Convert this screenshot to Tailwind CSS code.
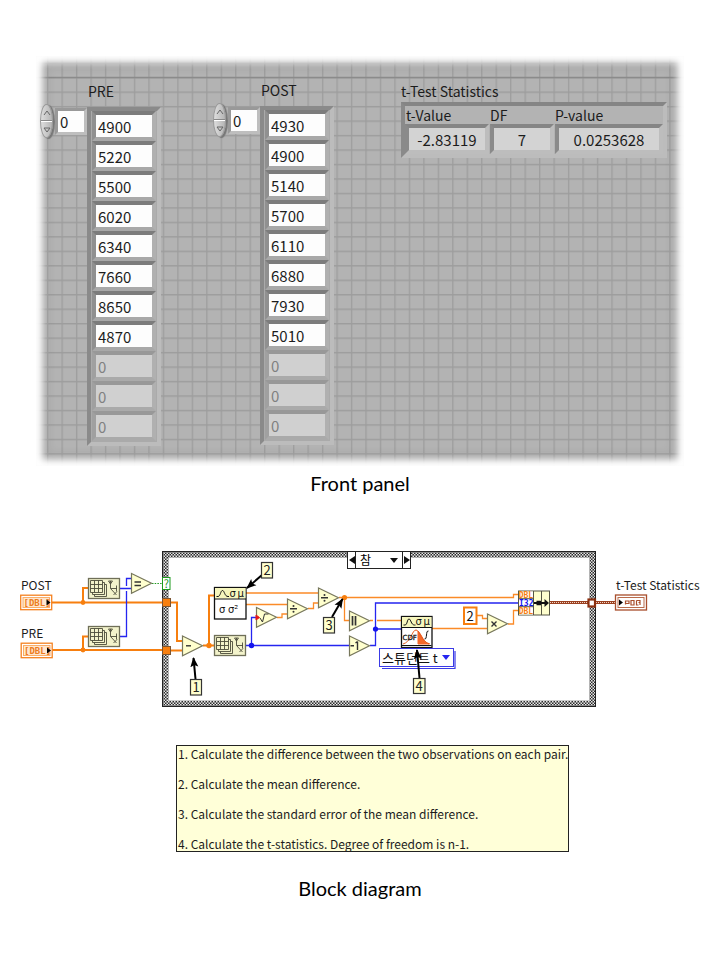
<!DOCTYPE html>
<html lang="en">
<head>
<meta charset="utf-8">
<meta name="viewport" content="width=device-width, initial-scale=1">
<title>Paired t-test</title>
<script src="https://cdn.jsdelivr.net/npm/@tailwindcss/browser@4"></script>
</head>
<body class="bg-white pb-14 font-['Noto_Sans_CJK_KR','Noto_Sans',sans-serif] text-[#1c1c1c]">
<main class="mx-auto max-w-[720px]">

<section aria-label="Front panel">
  <div class="relative mx-9 mt-14 overflow-hidden bg-[#b3b3b3]">
    <svg class="absolute inset-0 h-full w-full" aria-hidden="true">
      <defs><pattern id="grid" x="11" y="21" width="14.47" height="14.47" patternUnits="userSpaceOnUse"><path d="M.7 0V14.47M0 .7H14.47" stroke="#9d9d9d" stroke-width="1.3"/></pattern></defs>
      <rect width="100%" height="100%" fill="url(#grid)"/>
      <path d="M0 21.5H700" stroke="#8b8b8b" stroke-width="1.4"/>
    </svg>
    <div class="absolute inset-0 shadow-[inset_0_0_7px_7px_#fff,inset_0_0_12px_8px_#00000030]"></div>
    <div class="relative flex items-start pb-5 pl-1 pt-6 text-[15px] leading-[22px]">
      <div class="flex w-[173px] items-start" id="pre"></div>
      <div class="-mt-px flex w-[188px] items-start" id="post"></div>
      <div>
        <h2 class="text-[14px] leading-[22px]">t-Test Statistics</h2>
        <div class="flex border-4 border-b-[#bcbcbc] border-l-[#8a8a8a] border-r-[#bcbcbc] border-t-[#858585] bg-[#b3b3b3] text-[14px]">
          <label class="block w-[85px] leading-[18px]"><span class="block pl-px">t-Value</span><input readonly value="-2.83119" class="block h-[30px] w-[84px] border-4 border-b-[#bdbdbd] border-l-[#8a8a8a] border-r-[#bdbdbd] border-t-[#858585] bg-[#d3d3d3] text-center text-[15px]"></label>
          <label class="block w-[65px] leading-[18px]"><span class="block">DF</span><input readonly value="7" class="block h-[30px] w-[64px] border-4 border-b-[#bdbdbd] border-l-[#8a8a8a] border-r-[#bdbdbd] border-t-[#858585] bg-[#d3d3d3] text-center text-[15px]"></label>
          <label class="block w-[108px] leading-[18px]"><span class="block">P-value</span><input readonly value="0.0253628" class="block h-[30px] w-[108px] border-4 border-b-[#bdbdbd] border-l-[#8a8a8a] border-r-[#bdbdbd] border-t-[#858585] bg-[#d3d3d3] text-center text-[15px]"></label>
        </div>
      </div>
    </div>
  </div>
  <h1 class="mt-px text-center font-['Lato',sans-serif] text-[20px] leading-8 text-black">Front panel</h1>
</section>

<section aria-label="Block diagram">
  <svg class="mt-10 block w-full" viewBox="0 540 720 180" font-family="Noto Sans CJK KR, Noto Sans, sans-serif" font-size="12" fill="none">
    <defs>
      <pattern id="weave" width="3" height="3" patternUnits="userSpaceOnUse"><rect width="3" height="3" fill="#2a2a2a"/><path d="M0 0h1.500v1.500h-1.500zM1.500 1.500h1.500v1.500h-1.500z" fill="#e8e8e8"/></pattern>
      <pattern id="braid" width="2" height="3" patternUnits="userSpaceOnUse" y="602"><rect width="2" height="3" fill="#9a4020"/><rect y="1" width="1" height="1" fill="#f3d5c5"/></pattern>
      <marker id="tip" viewBox="0 0 10 10" refX="9" refY="5" markerWidth="10" markerHeight="10" markerUnits="userSpaceOnUse" orient="auto"><path d="M0 1L10 5L0 9L2 5Z" fill="#000"/></marker>
      <g id="tri"><path d="M.5 .5L20.5 10.3L.5 20.3Z" fill="#ffffce" stroke="#77775c" stroke-width="1.2"/></g>
      <g id="size">
        <rect x=".5" y=".5" width="31" height="20" fill="#f3f3cb" stroke="#6f6f58" stroke-width="1.3"/>
        <g stroke="#4c4c3a" stroke-width=".9" fill="#f3f3cb"><path d="M6.500 6.500h12v12h-12z"/><path d="M4.500 4.500h12v12h-12z"/><path d="M2.500 2.500h12v12h-12zM6.500 2.500v12M10.500 2.500v12M2.500 6.500h12M2.500 10.500h12"/></g>
        <path d="M20.500 3h4M22.500 3v7.500l6 6.500M22.500 10.500h6.500M28.500 7.500v6M25.500 17l3.500-3.500M20.500 3l2 3 2-3" stroke="#4c4c3a" stroke-width=".9"/>
      </g>
      <g id="dbl">
        <rect x=".7" y=".7" width="31" height="14.500" fill="#fff" stroke="#f58220" stroke-width="1.3"/>
        <rect x="3" y="3" width="26.500" height="10" fill="#ffe6cd" stroke="#f9ad6a" stroke-width="1"/>
        <text x="3.500" y="11.300" font-family="DejaVu Sans Mono, monospace" font-size="9" font-weight="700" fill="#ec7c20">[DBL]</text>
        <path d="M26.500 5l4 3-4 3z" fill="#000"/>
      </g>
    </defs>

    <!-- case structure frame -->
    <path fill-rule="evenodd" fill="url(#weave)" d="M162 552H596V708H162ZM168.500 558.500V702H589.500V558.500Z"/>
    <rect x="162.500" y="552.500" width="433" height="155" stroke="#222"/>
    <rect x="168.500" y="558.500" width="421" height="143" stroke="#aaa" stroke-width=".6"/>

    <!-- array wires -->
    <g stroke="#f77f0f" stroke-width="2">
      <path d="M52 603.500H163M52 651H163M83 603V589H89M83 651V637.500H89M170 603.500H177V642H183M170 651.500H183M203 646.500H214M209 646.500V596.500H214"/>
    </g>
    <!-- scalar wires -->
    <g stroke="#fb8b28" stroke-width="1.3">
      <path d="M246 594H318M246 605.500H288M277 618.500H282V615H288M308 609.500H313.500V604H319M339 598.500H513.500V595.500H518M344.500 598.500V621.500H350M370 621.500H373M377 621.500H401M432 629.500H488M477 616.500H482.500V619.500H488M508 625H513.500V611.500H518"/>
    </g>
    <g stroke="#2525f0" stroke-width="1.3">
      <path d="M120 589.500H132M120 637.500H126.500V592M126.500 587V579.500H132M246 646.500H350M251.500 646.500V618.500H257M370 646.500H375.500V604H518M375.500 630H401"/>
    </g>
    <g fill="#f77f0f"><circle cx="83" cy="603.500" r="2.400"/><circle cx="83" cy="651" r="2.400"/><circle cx="209" cy="646.500" r="2.700"/><circle cx="344.500" cy="598.500" r="2.600"/></g>
    <g fill="#1515ee"><circle cx="251.500" cy="646.500" r="2.700"/><circle cx="375.500" cy="630" r="2.600"/></g>
    <path d="M152 584.500H162" stroke="#1d9a1d" stroke-dasharray="1.500 1.200"/>

    <!-- terminals and tunnels -->
    <g fill="#1c1c1c"><text x="21" y="591">POST</text><text x="21" y="639">PRE</text><text x="616" y="591">t-Test Statistics</text></g>
    <use href="#dbl" x="20" y="595.500"/><use href="#dbl" x="20.500" y="643.500"/>
    <g fill="#f77f0f" stroke="#7c5430"><rect x="162.500" y="599.500" width="8" height="8"/><rect x="162.500" y="647.500" width="8" height="8"/></g>
    <rect x="162.500" y="578.500" width="7.500" height="12" fill="#fff" stroke="#1d9a1d"/>
    <text x="163.800" y="588.500" font-size="11" fill="#1d9a1d">?</text>

    <!-- array size functions -->
    <use href="#size" x="88" y="579"/><use href="#size" x="88" y="627"/><use href="#size" x="214" y="636"/>

    <!-- arithmetic functions -->
    <use href="#tri" x="131" y="574"/><use href="#tri" x="182" y="636.500"/><use href="#tri" x="256" y="608"/><use href="#tri" x="287" y="599.500"/><use href="#tri" x="318" y="588.500"/><use href="#tri" x="349" y="611.500"/><use href="#tri" x="349" y="636.500"/><use href="#tri" x="487" y="614.500"/>
    <g stroke="#333" stroke-width="1.400">
      <path d="M134.500 583H141M134.500 586.500H141"/>
      <path d="M186 646.800H191"/>
      <path d="M260 619L262.500 623L264.500 615H268.500" stroke-width="1"/>
      <path d="M290 609.800H297M321 598.800H328"/>
      <path d="M352.500 617V626.500M355.500 617V626.500" stroke-width="1.700"/>
      <path d="M350.500 646.800H354M357.500 642.500V651M355.500 644L357.500 642.500"/>
      <path d="M491.500 622.500L496.500 627.500M496.500 622.500L491.500 627.500"/>
    </g>
    <g fill="#333"><circle cx="293.500" cy="607" r="1"/><circle cx="293.500" cy="612.700" r="1"/><circle cx="324.500" cy="596" r="1"/><circle cx="324.500" cy="601.700" r="1"/></g>
    <path d="M256 616l3.500 2.500-3.500 2.500z" fill="#e81818" stroke="#e81818"/>

    <!-- standard deviation -->
    <rect x="214.500" y="588.500" width="31.500" height="31.500" fill="#fff" stroke="#111" stroke-width="1.300"/>
    <path d="M215 589H245.500V599.500H215Z" fill="#f6f6bd"/>
    <path d="M214 600H246" stroke="#111"/>
    <path d="M216.500 597.500H218C220.500 597.500 220.500 591.500 222.500 591.500S224.500 597.500 228 597.500H229" stroke="#111"/>
    <g fill="#111" font-family="DejaVu Sans, sans-serif" font-size="10"><text x="229.500" y="597.500">σ</text><text x="237.500" y="597.500">μ</text><text x="219" y="614">σ</text><text x="228" y="614">σ²</text></g>

    <!-- distribution function -->
    <rect x="401.500" y="617.500" width="30.500" height="31" fill="#fff" stroke="#111" stroke-width="1.300"/>
    <path d="M402 618H431.500V628H402Z" fill="#f6f6bd"/>
    <path d="M401 628.500H432M402 646.500H431.500" stroke="#111"/>
    <path d="M403.500 626H405C407.500 626 407 620 409 620S411 626 414.500 626H415.500" stroke="#111"/>
    <g fill="#111" font-family="DejaVu Sans, sans-serif" font-size="10"><text x="415.500" y="626">σ</text><text x="423.500" y="626">μ</text></g>
    <path d="M418 632V645H429C423.500 643.500 422.500 637 418 632Z" fill="#f4682a" stroke="#f4682a"/>
    <path d="M403 645C411 643 412 631 416 631C420 631 421 643 430 645" stroke="#e65a20"/>
    <text x="402.500" y="640.500" font-family="DejaVu Sans, sans-serif" font-size="7" fill="#111" stroke="#111" stroke-width=".3">CDF</text>
    <path d="M428.500 632C425.500 631 427.500 641 424.500 640" stroke="#111"/>

    <!-- numeric constant -->
    <rect x="464" y="608.500" width="12.500" height="16.500" fill="#fff" stroke="#f77f0f" stroke-width="2"/>
    <text x="466.500" y="621.500" font-size="13" fill="#111">2</text>

    <!-- bundle -->
    <rect x="518.500" y="592" width="31" height="24" fill="#ffffce" stroke="#555544"/>
    <rect x="519" y="592.500" width="14.500" height="23" fill="#fff"/>
    <path d="M533.500 592V616M541.500 592V616M518 599.700H534M518 607.700H534" stroke="#555544"/>
    <g font-family="DejaVu Sans Mono, monospace" font-size="8" font-weight="700"><text x="518.700" y="598.800" fill="#f77f0f">DBL</text><text x="519" y="607" fill="#1515ee">I32</text><text x="518.700" y="615" fill="#f77f0f">DBL</text></g>
    <path d="M534 604H546M536 604H541" stroke="#111" stroke-width="2"/><path d="M536.500 604H541" stroke="#111" stroke-width="4.500"/><path d="M544.500 600L549 604L544.500 608Z" fill="#111"/>

    <!-- cluster wire and terminal -->
    <rect x="550" y="602" width="65" height="3" fill="url(#braid)"/>
    <rect x="588.500" y="600.500" width="6.500" height="7" fill="#fff" stroke="#8b3010" stroke-width="2.200"/>
    <rect x="615.500" y="596" width="31" height="15" fill="#fff" stroke="#a84e2c" stroke-width="1.300"/>
    <rect x="618" y="598.500" width="26" height="10" fill="#fff" stroke="#b96b4b"/>
    <path d="M619 600.500l4 3-4 3z" fill="#000"/>
    <path d="M625.500 605.500V602H629V604.500H625.500M631 601.500H634V606H631ZM636.500 601.500H640V606M636.500 601.500V606H638.500M638.500 603.500H640" stroke="#a84e2c" stroke-width="1.200"/>

    <!-- case selector -->
    <foreignObject x="347" y="552" width="64" height="18">
      <div class="flex h-[18px] w-16 border border-[#222] bg-white text-black">
        <button aria-label="Previous case" class="flex w-2 items-center justify-center border-r border-[#222]"><svg viewBox="0 0 6 8" class="h-2 w-1.5"><path d="M6 0V8L0 4Z" fill="#111"/></svg></button>
        <div class="relative flex-1">
          <select aria-label="Case" class="block h-4 w-full appearance-none pl-1 text-[12px] leading-4"><option>참</option></select>
          <svg viewBox="0 0 8 5" class="pointer-events-none absolute right-1 top-1.5 h-[5px] w-2"><path d="M0 0H8L4 5Z" fill="#111"/></svg>
        </div>
        <button aria-label="Next case" class="flex w-2 items-center justify-center border-l border-[#222]"><svg viewBox="0 0 6 8" class="h-2 w-1.5"><path d="M0 0V8L6 4Z" fill="#111"/></svg></button>
      </div>
    </foreignObject>

    <!-- distribution selector -->
    <path d="M455 652V669.500H382" stroke="#3a3ae6" stroke-width="1.200"/>
    <foreignObject x="379" y="649" width="75" height="19">
      <div class="relative h-[19px] border border-[#3a3ae6] bg-white">
        <select aria-label="Distribution" class="block h-[17px] w-full appearance-none pl-0.5 text-[13px] leading-[17px] text-[#111]"><option>스튜던트 t</option></select>
        <svg viewBox="0 0 8 5" class="pointer-events-none absolute right-[3px] top-1.5 h-[5px] w-2"><path d="M0 0H8L4 5Z" fill="#2525f0"/></svg>
      </div>
    </foreignObject>

    <!-- callouts -->
    <g stroke="#000" stroke-width="2"><path d="M195.500 680L193.500 659" marker-end="url(#tip)"/><path d="M262 576L247 589" marker-end="url(#tip)"/><path d="M332 618L342.500 600" marker-end="url(#tip)"/><path d="M419.500 679L417 651" marker-end="url(#tip)"/></g>
    <g fill="#ffffce" stroke="#333" stroke-width="1.200"><rect x="190.500" y="680.500" width="11" height="15.500"/><rect x="261.500" y="563.500" width="11" height="15.500"/><rect x="323.500" y="618.500" width="11" height="15.500"/><rect x="413.500" y="679.500" width="11.500" height="15"/></g>
    <g fill="#222" font-size="13" text-anchor="middle"><text x="196" y="693">1</text><text x="267" y="576">2</text><text x="329" y="631">3</text><text x="419" y="692">4</text></g>
  </svg>

  <div class="ml-44 mt-[26px] flex w-fit flex-col gap-[15px] border border-[#222] bg-[#ffffd8] pl-px text-[12px] leading-[15px]">
    <p>1. Calculate the difference between the two observations on each pair.</p>
    <p>2. Calculate the mean difference.</p>
    <p>3. Calculate the standard error of the mean difference.</p>
    <p>4. Calculate the t-statistics. Degree of freedom is n-1.</p>
  </div>
  <h1 class="mt-5 text-center font-['Lato',sans-serif] text-[20px] leading-8 text-black">Block diagram</h1>
</section>
</main>

<script>
  // Builds an array control: index spinner plus a bevelled column of numeric cells.
  const arrayControl = (name, values) => `
    <div class="mt-6 flex w-[47px] items-center">
      <div class="flex h-[34px] w-[13px] flex-col overflow-hidden rounded-[50%] border border-[#999] bg-linear-to-r from-[#dedede] to-[#b4b4b4] shadow-[2px_1px_1px_#777]">
        <button aria-label="Increase ${name} index" class="flex flex-1 items-center justify-center border-b border-[#888]"><svg viewBox="0 0 8 6" class="h-1.5 w-2" fill="none" stroke="#666"><path d="M1 5L4 1L7 5"/></svg></button>
        <button aria-label="Decrease ${name} index" class="flex flex-1 items-center justify-center border-t border-white"><svg viewBox="0 0 8 6" class="h-1.5 w-2" fill="none" stroke="#666"><path d="M1 1H7L4 5Z"/></svg></button>
      </div>
      <input aria-label="${name} index" value="0" class="ml-0.5 h-[27px] w-8 border-[3px] border-b-[#bebebe] border-l-[#999] border-r-[#bebebe] border-t-[#999] bg-[#fdfdfd] pl-0.5">
    </div>
    <div>
      <h2 class="mb-1 pl-px text-[14px] leading-[23px]">${name}</h2>
      <div class="border-4 border-b-[#bcbcbc] border-l-[#8a8a8a] border-r-[#bcbcbc] border-t-[#8a8a8a] bg-[#aaa] px-px">
        ${values.map((v, i) => v === null
          ? `<input aria-label="${name} ${i}" readonly value="0" class="block h-[30px] w-[64px] border-4 border-b-[#aaa] border-l-[#a0a0a0] border-r-[#b0b0b0] border-t-[#989898] bg-[#d0d0d0] pl-0.5 text-[#808080]">`
          : `<input aria-label="${name} ${i}" value="${v}" class="block h-[30px] w-[64px] border-4 border-b-[#a8a8a8] border-l-[#909090] border-r-[#b0b0b0] border-t-[#7c7c7c] bg-[#fdfdfd] pl-0.5">`).join('')}
        <div class="h-px"></div>
      </div>
    </div>`;
  document.getElementById('pre').innerHTML = arrayControl('PRE', [4900, 5220, 5500, 6020, 6340, 7660, 8650, 4870, null, null, null]);
  document.getElementById('post').innerHTML = arrayControl('POST', [4930, 4900, 5140, 5700, 6110, 6880, 7930, 5010, null, null, null]);
</script>
</body>
</html>
